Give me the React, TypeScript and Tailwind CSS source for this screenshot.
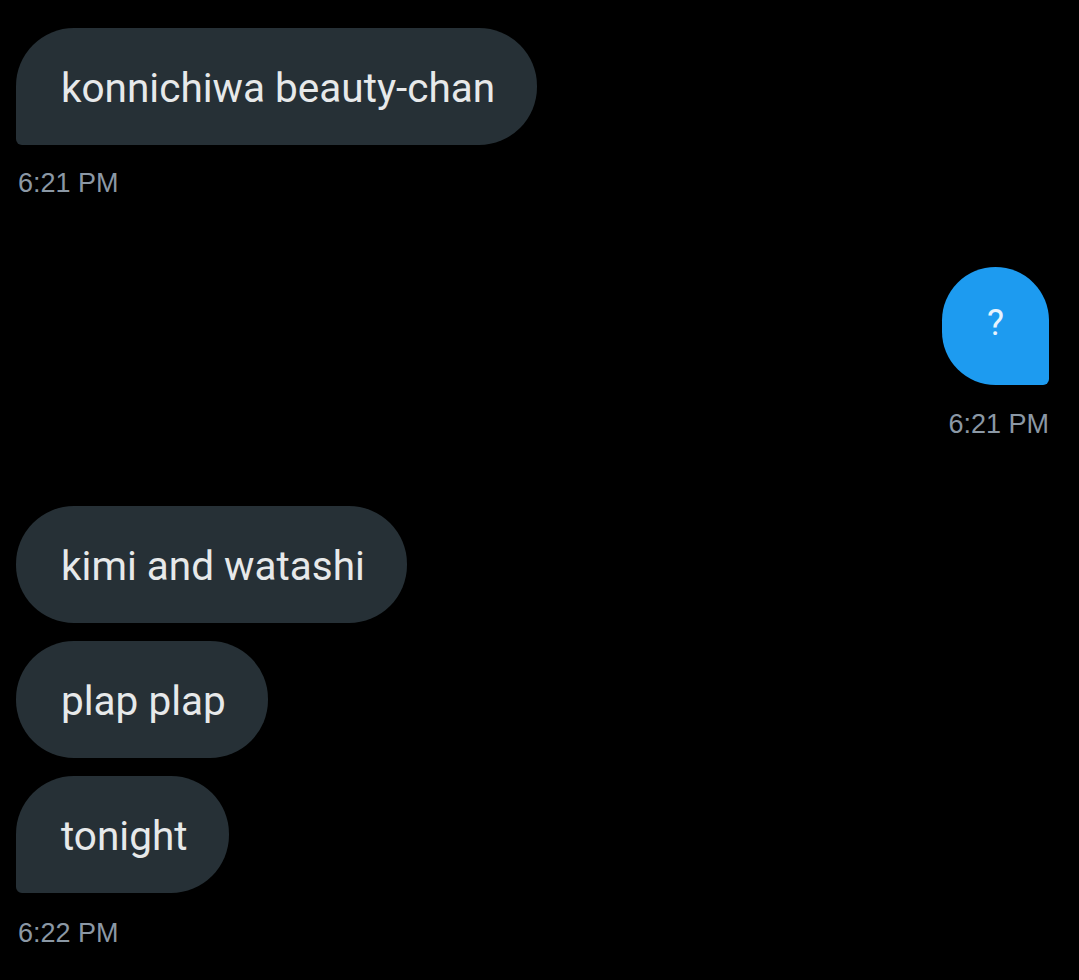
import React from "react";

type Msg = { text: string; last?: boolean };

const Received = ({ text, last }: Msg) => (
  <div
    className={
      "flex h-[117px] w-fit items-center rounded-[58px] bg-[#263036] pl-[45px] pr-[42px] text-[40.5px] text-[#e7e9ea] " +
      (last ? "rounded-bl-[6px]" : "")
    }
    style={{ fontFamily: "Roboto, 'Noto Sans', sans-serif" }}
  >
    <span className="pt-[4px]">{text}</span>
  </div>
);

const Time = ({ children, right }: { children: React.ReactNode; right?: boolean }) => (
  <p
    className={"text-[27px] leading-none text-[#8b98a5] " + (right ? "text-right" : "")}
    style={{ fontFamily: "'Liberation Sans', Arial, sans-serif" }}
  >
    {children}
  </p>
);

export default function App() {
  return (
    <div className="h-[980px] w-[1079px] overflow-hidden bg-black pl-[16px] pr-[30px] pt-[28px]">
      <Received text="konnichiwa beauty-chan" last />
      <div className="mt-[25px] pl-[2px]">
        <Time>6:21 PM</Time>
      </div>

      <div className="mt-[70px] flex flex-col items-end">
        <div
          className="flex h-[118px] w-[107px] items-center justify-center rounded-[54px] rounded-br-[6px] bg-[#1d9bf0] pb-[6px] text-[36px] text-[#e7f3fd]"
          style={{ fontFamily: "Roboto, sans-serif" }}
        >
          ?
        </div>
        <div className="mt-[26px]">
          <Time right>6:21 PM</Time>
        </div>
      </div>

      <div className="mt-[68px] flex flex-col gap-[18px]">
        <Received text="kimi and watashi" />
        <Received text="plap plap" />
        <Received text="tonight" last />
      </div>
      <div className="mt-[27px] pl-[2px]">
        <Time>6:22 PM</Time>
      </div>
    </div>
  );
}
